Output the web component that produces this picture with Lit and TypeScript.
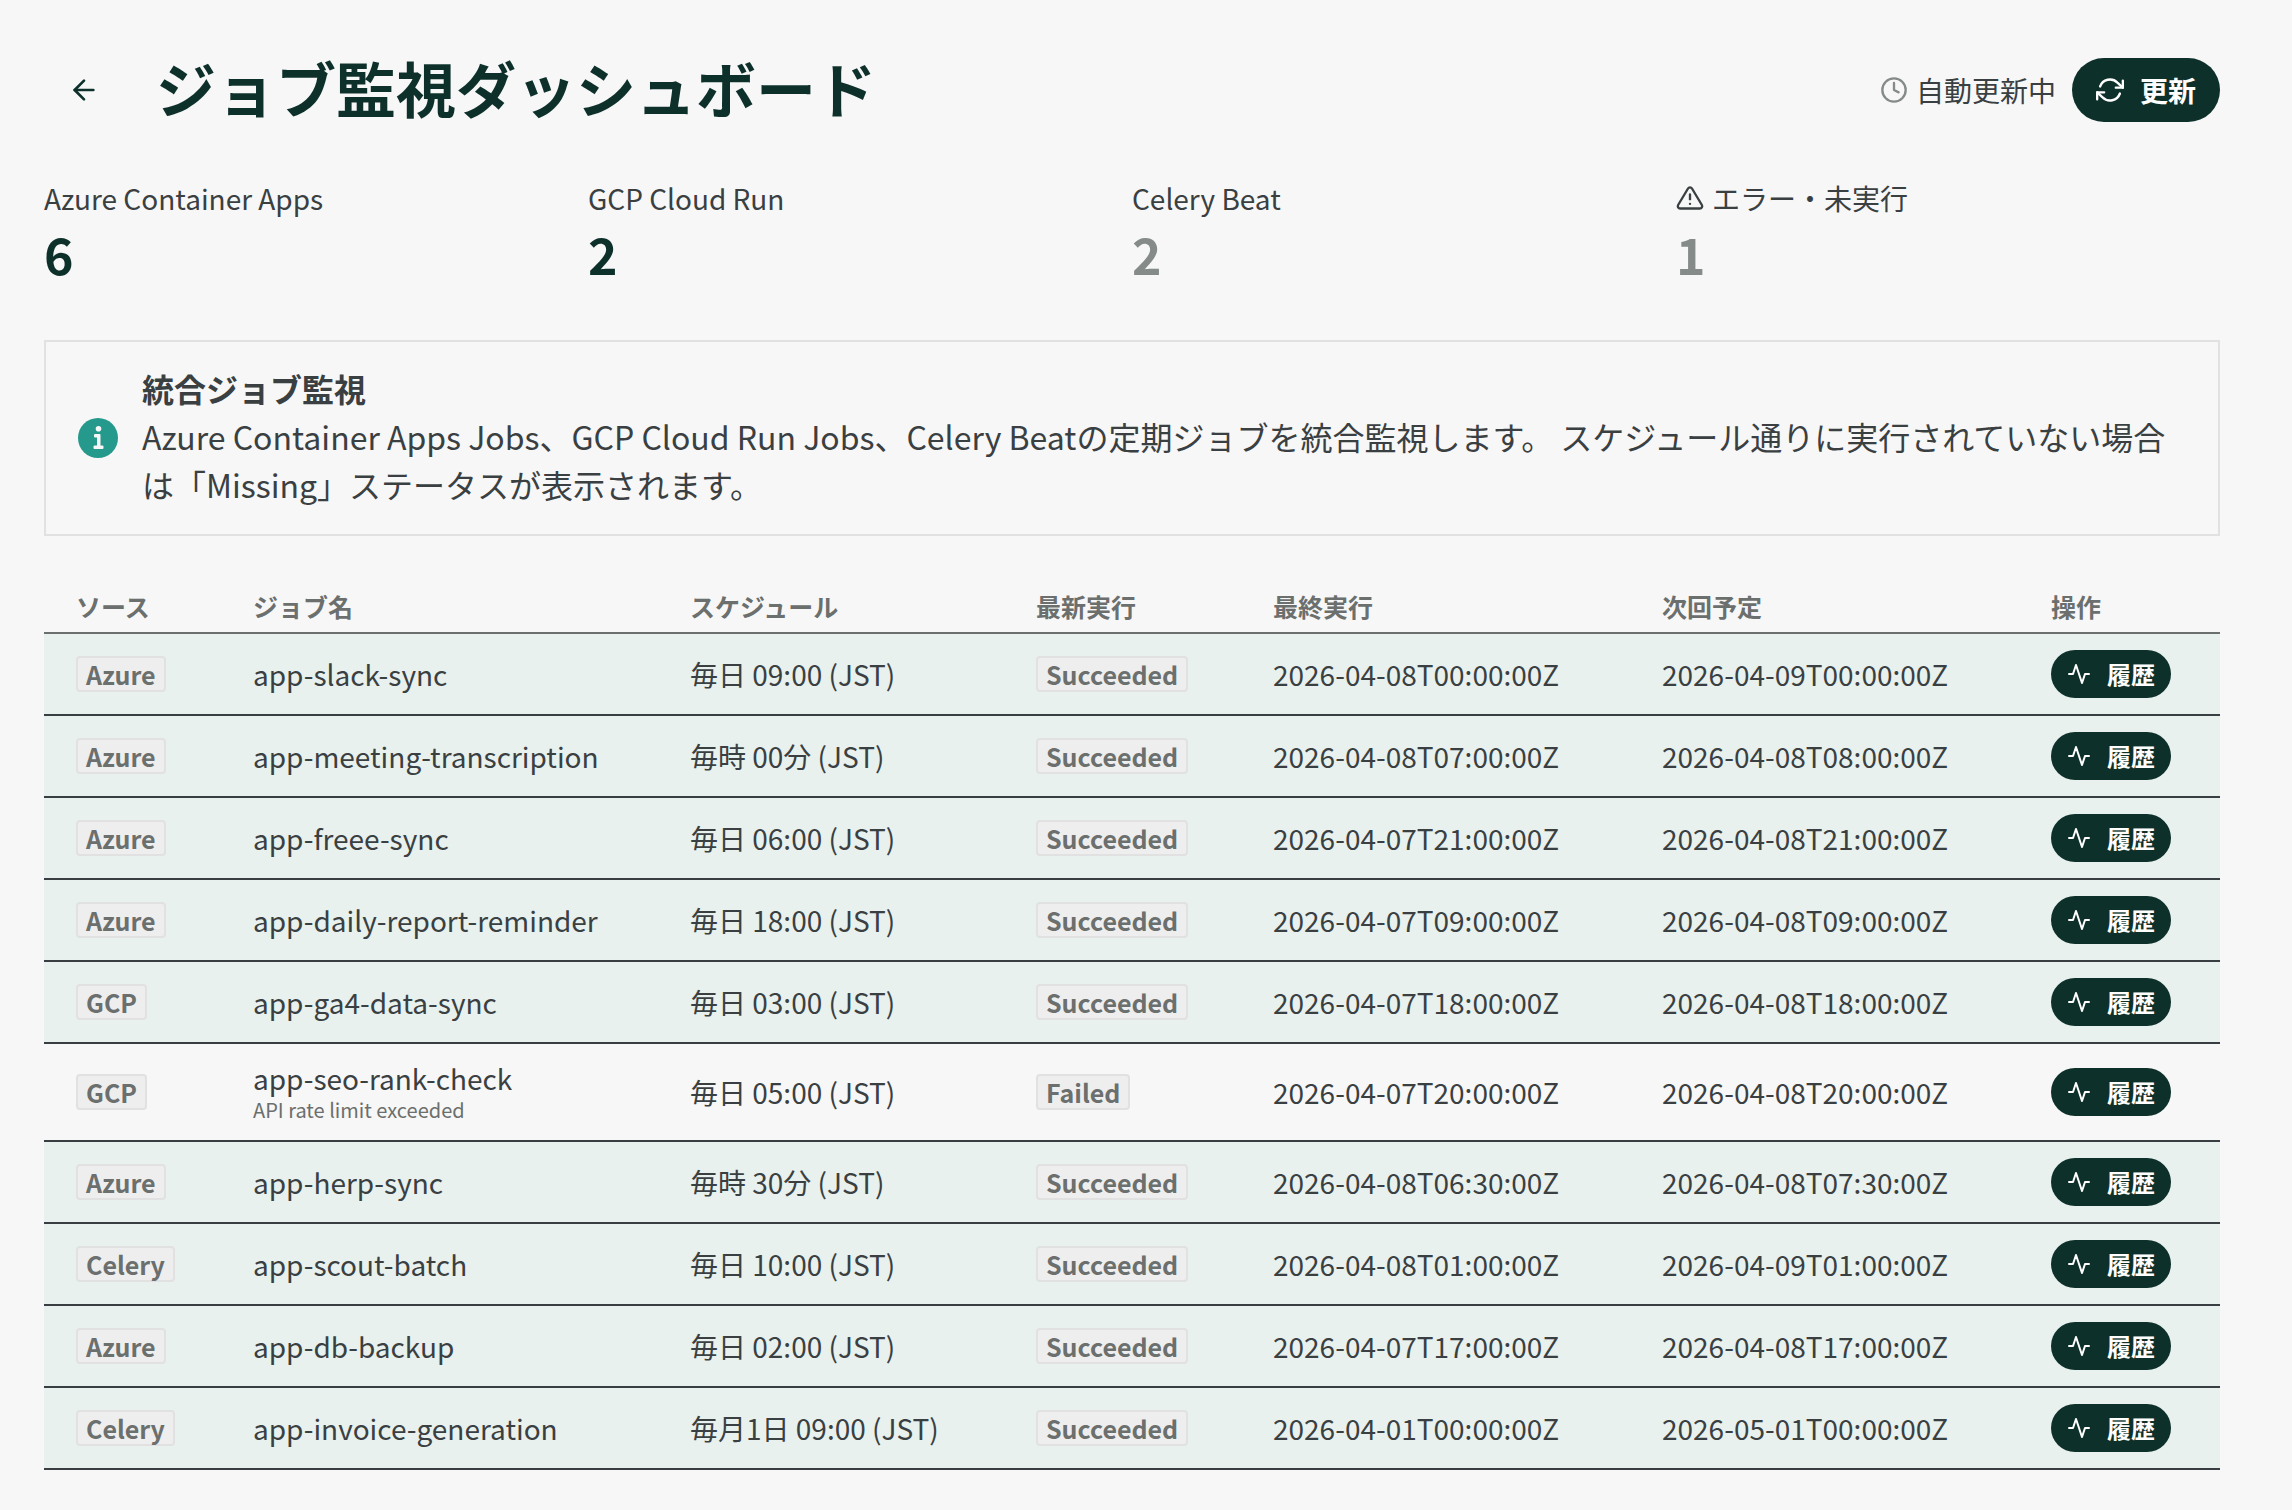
import { LitElement, html, css, svg } from "lit";
import { customElement, property } from "lit/decorators.js";
import { classMap } from "lit/directives/class-map.js";

interface Job {
  source: string;
  name: string;
  schedule: string;
  status: string;
  last: string;
  next: string;
  error?: string;
}

interface Stat {
  label: string;
  value: number;
  muted?: boolean;
  warn?: boolean;
}

const ICONS = {
  back: svg`<path d="M19 12H5"/><path d="M12 19l-7-7 7-7"/>`,
  clock: svg`<circle cx="12" cy="12" r="10"/><path d="M12 6v6l4 2"/>`,
  refresh: svg`<path d="M23 4v6h-6"/><path d="M1 20v-6h6"/><path d="M3.51 9a9 9 0 0 1 14.85-3.36L23 10M1 14l4.64 4.36A9 9 0 0 0 20.49 15"/>`,
  warning: svg`<path d="M10.29 3.86L1.82 18a2 2 0 0 0 1.71 3h16.94a2 2 0 0 0 1.71-3L13.71 3.86a2 2 0 0 0-3.42 0z"/><path d="M12 9v4"/><path d="M12 17h.01"/>`,
  activity: svg`<path d="M22 12h-4l-3 9L9 3l-3 9H2"/>`,
};

const STATS: Stat[] = [
  { label: "Azure Container Apps", value: 6 },
  { label: "GCP Cloud Run", value: 2 },
  { label: "Celery Beat", value: 2, muted: true },
  { label: "エラー・未実行", value: 1, muted: true, warn: true },
];

const COLUMNS: [string, string][] = [
  ["ソース", "source"],
  ["ジョブ名", "name"],
  ["スケジュール", "schedule"],
  ["最新実行", "status"],
  ["最終実行", "time"],
  ["次回予定", "time"],
  ["操作", "action"],
];

const JOBS: Job[] = [
  { source: "Azure", name: "app-slack-sync", schedule: "毎日 09:00 (JST)", status: "Succeeded", last: "2026-04-08T00:00:00Z", next: "2026-04-09T00:00:00Z" },
  { source: "Azure", name: "app-meeting-transcription", schedule: "毎時 00分 (JST)", status: "Succeeded", last: "2026-04-08T07:00:00Z", next: "2026-04-08T08:00:00Z" },
  { source: "Azure", name: "app-freee-sync", schedule: "毎日 06:00 (JST)", status: "Succeeded", last: "2026-04-07T21:00:00Z", next: "2026-04-08T21:00:00Z" },
  { source: "Azure", name: "app-daily-report-reminder", schedule: "毎日 18:00 (JST)", status: "Succeeded", last: "2026-04-07T09:00:00Z", next: "2026-04-08T09:00:00Z" },
  { source: "GCP", name: "app-ga4-data-sync", schedule: "毎日 03:00 (JST)", status: "Succeeded", last: "2026-04-07T18:00:00Z", next: "2026-04-08T18:00:00Z" },
  { source: "GCP", name: "app-seo-rank-check", schedule: "毎日 05:00 (JST)", status: "Failed", last: "2026-04-07T20:00:00Z", next: "2026-04-08T20:00:00Z", error: "API rate limit exceeded" },
  { source: "Azure", name: "app-herp-sync", schedule: "毎時 30分 (JST)", status: "Succeeded", last: "2026-04-08T06:30:00Z", next: "2026-04-08T07:30:00Z" },
  { source: "Celery", name: "app-scout-batch", schedule: "毎日 10:00 (JST)", status: "Succeeded", last: "2026-04-08T01:00:00Z", next: "2026-04-09T01:00:00Z" },
  { source: "Azure", name: "app-db-backup", schedule: "毎日 02:00 (JST)", status: "Succeeded", last: "2026-04-07T17:00:00Z", next: "2026-04-08T17:00:00Z" },
  { source: "Celery", name: "app-invoice-generation", schedule: "毎月1日 09:00 (JST)", status: "Succeeded", last: "2026-04-01T00:00:00Z", next: "2026-05-01T00:00:00Z" },
];

@customElement("line-icon")
class LineIcon extends LitElement {
  @property() name: keyof typeof ICONS = "back";

  static styles = css`
    :host { display: block; width: 28px; height: 28px; flex: none; }
    .icon {
      display: block; width: 100%; height: 100%; overflow: visible; fill: none;
      stroke: currentColor; stroke-width: 2; stroke-linecap: round; stroke-linejoin: round;
    }
  `;

  render() {
    return html`<svg class="icon" viewBox="0 0 24 24" aria-hidden="true">${ICONS[this.name]}</svg>`;
  }
}

@customElement("app-root")
class AppRoot extends LitElement {
  static styles = css`
    :host {
      --ink: #3a4042;
      --brand: #0d302a;
      --muted: #858b89;
      --label: #6b6f6d;
      --edge: #e0e1e0;
      display: block;
      box-sizing: border-box;
      min-height: 100vh;
      padding: 50px 72px 40px 44px;
      background: #f7f7f7;
      color: var(--ink);
      font-family: "Noto Sans CJK JP", sans-serif;
      font-size: 28px;
      line-height: 36px;
    }
    h1, h2, p, dl, dd { margin: 0; }
    button { border: 0; cursor: pointer; font: inherit; color: inherit; }
    .top { display: flex; align-items: center; gap: 32px; }
    .back {
      display: grid; place-items: center; width: 80px; height: 80px; padding: 0;
      border-radius: 40px; background: none; color: var(--brand);
    }
    .back line-icon { width: 32px; height: 32px; }
    .title { flex: 1; padding-bottom: 6px; color: var(--brand); font-size: 60px; line-height: 74px; font-weight: 700; }
    .tools { display: flex; align-items: center; gap: 16px; }
    .auto { display: flex; align-items: center; gap: 8px; }
    .auto line-icon { color: var(--muted); }
    .pill { display: inline-flex; align-items: center; gap: 16px; background: var(--brand); color: #fff; font-weight: 700; white-space: nowrap; }
    .refresh { height: 64px; padding: 0 24px; border-radius: 32px; }
    .history { height: 48px; padding: 0 16px; border-radius: 24px; font-size: 24px; vertical-align: top; }
    .history line-icon { width: 24px; height: 24px; }

    .stats { display: grid; grid-template-columns: repeat(4, 1fr); margin-top: 46px; }
    .stat dt { display: flex; align-items: center; gap: 8px; line-height: 44px; }
    .stat dd { color: var(--brand); font-size: 50px; line-height: 66px; font-weight: 700; }
    .stat dd.muted { color: var(--muted); }

    .notice {
      display: flex; align-items: center; gap: 24px; margin-top: 54px; padding: 22px 32px;
      border: 2px solid var(--edge); font-size: 32px; line-height: 48px;
    }
    .copy { padding-bottom: 4px; }
    .notice h2 { font: inherit; font-weight: 700; }
    .info { flex: none; width: 40px; height: 40px; }
    .disc { fill: #24998c; }
    .mark { fill: #f7f7f7; }

    .jobs { width: 100%; margin-top: 48px; border-collapse: separate; border-spacing: 0; }
    .source { width: 113px; }
    .name { width: 373px; }
    .schedule { width: 282px; }
    .status { width: 173px; }
    .time { width: 325px; }
    .action { width: 137px; }
    th {
      padding: 4px 32px 8px; border-bottom: 2px solid var(--label); color: var(--label);
      font-size: 25px; font-weight: 700; text-align: left; white-space: nowrap;
    }
    td { padding: 16px 32px; border-bottom: 2px solid #383e42; background: #e8f1ee; white-space: nowrap; }
    .failed td { background: none; }
    .error { color: var(--label); font-size: 20px; line-height: 28px; }
    .badge {
      display: inline-block; padding: 0 8px; border: 2px solid var(--edge); border-radius: 4px;
      background: #eee; color: var(--label); font-size: 25px; line-height: 32px; font-weight: 700; vertical-align: top;
    }
  `;

  private row(job: Job) {
    return html`<tr class=${classMap({ failed: job.status === "Failed" })}>
      <td><span class="badge">${job.source}</span></td>
      <td>${job.name}${job.error ? html`<div class="error">${job.error}</div>` : ""}</td>
      <td>${job.schedule}</td>
      <td><span class="badge">${job.status}</span></td>
      <td>${job.last}</td>
      <td>${job.next}</td>
      <td><button class="pill history" type="button"><line-icon name="activity"></line-icon>履歴</button></td>
    </tr>`;
  }

  render() {
    return html`
      <header class="top">
        <button class="back" type="button" aria-label="戻る"><line-icon name="back"></line-icon></button>
        <h1 class="title">ジョブ監視ダッシュボード</h1>
        <div class="tools">
          <span class="auto"><line-icon name="clock"></line-icon>自動更新中</span>
          <button class="pill refresh" type="button"><line-icon name="refresh"></line-icon>更新</button>
        </div>
      </header>

      <dl class="stats">
        ${STATS.map((s) => html`<div class="stat">
          <dt>${s.warn ? html`<line-icon name="warning"></line-icon>` : ""}${s.label}</dt>
          <dd class=${classMap({ muted: !!s.muted })}>${s.value}</dd>
        </div>`)}
      </dl>

      <section class="notice">
        <svg class="info" viewBox="0 0 40 40" aria-hidden="true">
          <circle class="disc" cx="20" cy="20" r="20"/>
          <circle class="mark" cx="20.5" cy="10.8" r="2.8"/>
          <path class="mark" d="M17 16h4.5a1 1 0 0 1 1 1v10.5h2a1 1 0 0 1 1 1v1.5a1 1 0 0 1-1 1h-8a1 1 0 0 1-1-1v-1.5a1 1 0 0 1 1-1h2.500v-8h-2a1 1 0 0 1-1-1v-1.500a1 1 0 0 1 1-1z"/>
        </svg>
        <div class="copy">
          <h2>統合ジョブ監視</h2>
          <p>Azure Container Apps Jobs、GCP Cloud Run Jobs、Celery Beatの定期ジョブを統合監視します。 スケジュール通りに実行されていない場合は「Missing」ステータスが表示されます。</p>
        </div>
      </section>

      <table class="jobs">
        <thead>
          <tr>${COLUMNS.map(([label, kind]) => html`<th class=${kind} scope="col">${label}</th>`)}</tr>
        </thead>
        <tbody>${JOBS.map((job) => this.row(job))}</tbody>
      </table>
    `;
  }
}
